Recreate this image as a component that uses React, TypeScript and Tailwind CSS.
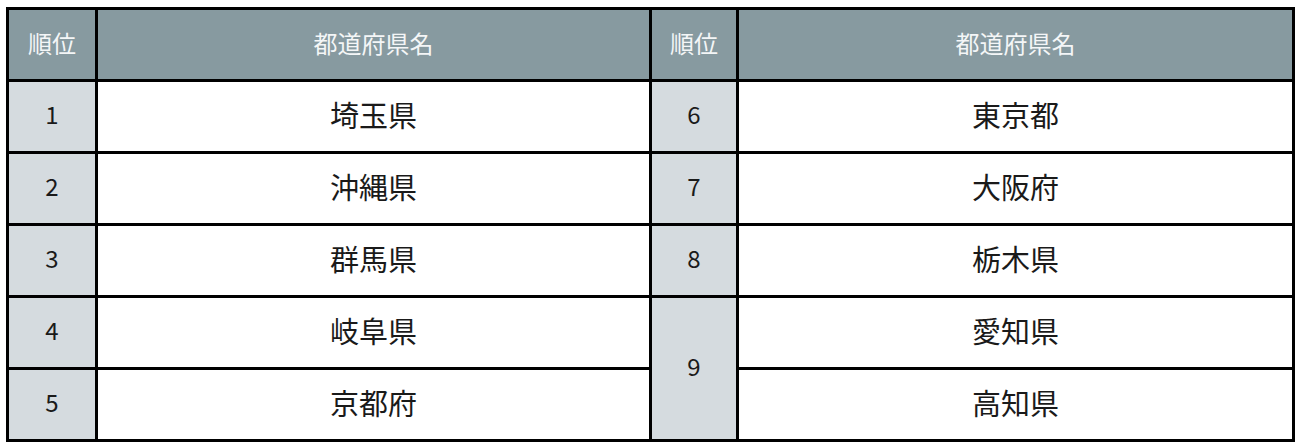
const rows: [string, string, string | null, string][] = [
  ["1", "埼玉県", "6", "東京都"],
  ["2", "沖縄県", "7", "大阪府"],
  ["3", "群馬県", "8", "栃木県"],
  ["4", "岐阜県", "9", "愛知県"],
  ["5", "京都府", null, "高知県"],
];

const font = { fontFamily: '"Noto Sans CJK JP", "Noto Sans", sans-serif' };

export default function App() {
  return (
    <div className="bg-white w-[1298px] h-[448px] pt-[7px] pl-[6px]" style={font}>
      <table className="table-fixed border-collapse w-[1286px]">
        <colgroup>
          <col className="w-[89px]" />
          <col className="w-[554px]" />
          <col className="w-[87px]" />
          <col className="w-[556px]" />
        </colgroup>
        <thead>
          <tr className="h-[72px] bg-[#879aa0] text-[#f4f6f7] text-[24px]">
            <th className="border-[3px] border-black font-normal pb-[3px]">順位</th>
            <th className="border-[3px] border-black font-normal pb-[3px]">都道府県名</th>
            <th className="border-[3px] border-black font-normal pb-[3px]">順位</th>
            <th className="border-[3px] border-black font-normal pb-[3px]">都道府県名</th>
          </tr>
        </thead>
        <tbody>
          {rows.map(([n1, p1, n2, p2], i) => (
            <tr key={i} className="h-[72px]">
              <td className="border-[3px] border-black bg-[#d5dbdf] text-center text-[24px] leading-none pb-[6px] text-[#1a1a1a]">
                {n1}
              </td>
              <td className="border-[3px] border-black bg-white text-center text-[29px] leading-none pb-[4px] text-[#1a1a1a]">
                {p1}
              </td>
              {n2 !== null && (
                <td
                  rowSpan={n2 === "9" ? 2 : 1}
                  className="border-[3px] border-black bg-[#d5dbdf] text-center text-[24px] leading-none pb-[6px] text-[#1a1a1a]"
                >
                  {n2}
                </td>
              )}
              <td className="border-[3px] border-black bg-white text-center text-[29px] leading-none pb-[4px] text-[#1a1a1a]">
                {p2}
              </td>
            </tr>
          ))}
        </tbody>
      </table>
    </div>
  );
}
